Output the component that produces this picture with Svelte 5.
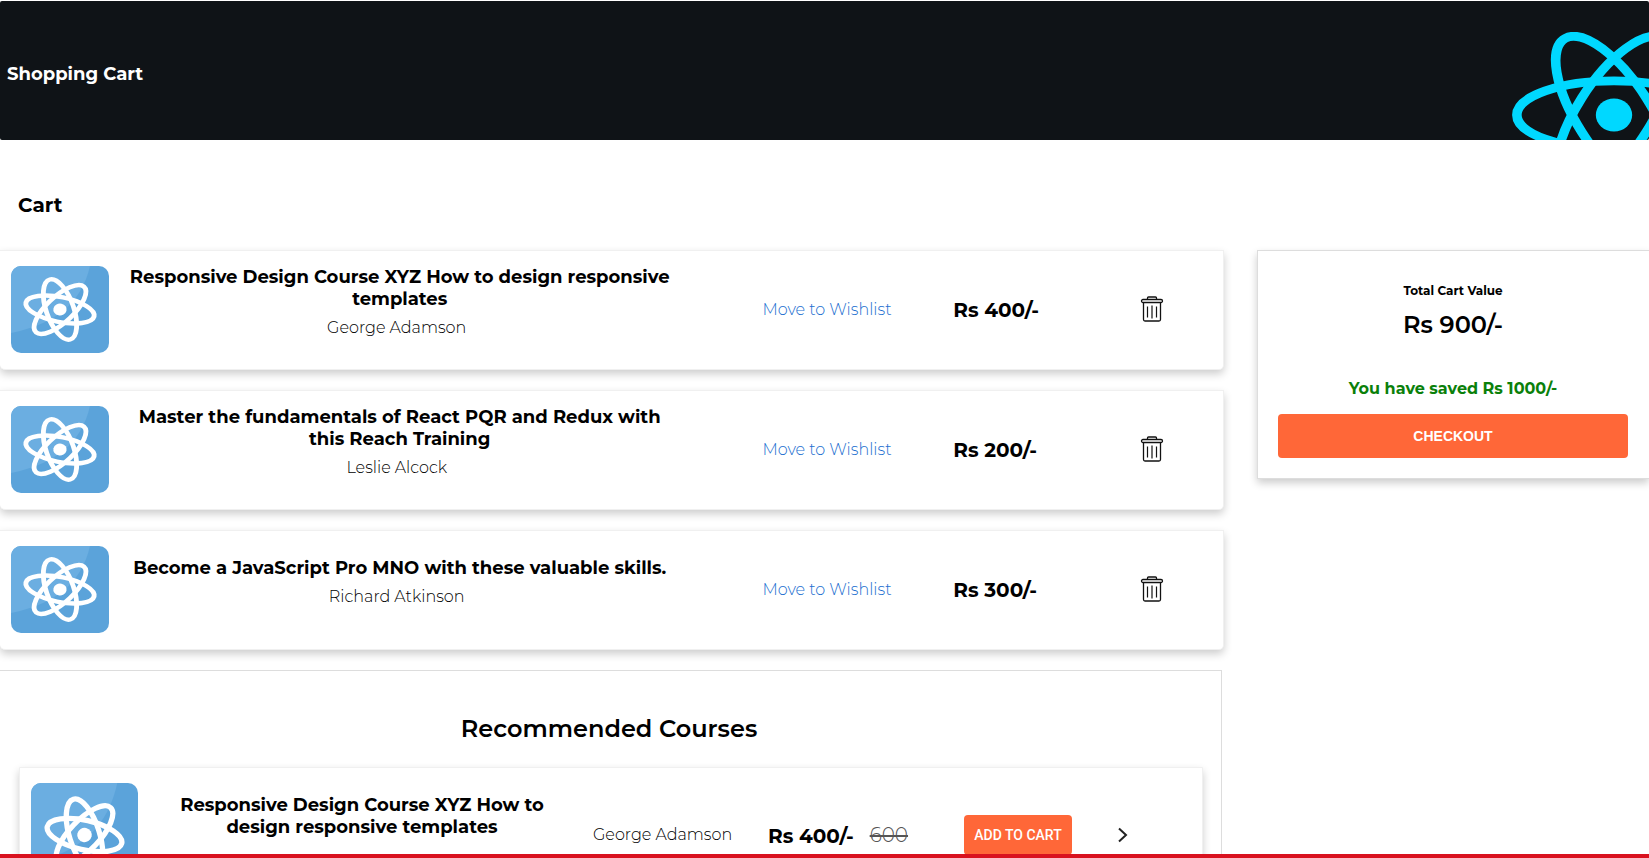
<script>
  const cartItems = [
    { title: 'Responsive Design Course XYZ How to design responsive templates', author: 'George Adamson', price: 400 },
    { title: 'Master the fundamentals of React PQR and Redux with this Reach Training', author: 'Leslie Alcock', price: 200 },
    { title: 'Become a JavaScript Pro MNO with these valuable skills.', author: 'Richard Atkinson', price: 300 }
  ];
  const recommended = [
    { title: 'Responsive Design Course XYZ How to design responsive templates', author: 'George Adamson', price: 400, oldPrice: 600 }
  ];
  const total = cartItems.reduce((sum, item) => sum + item.price, 0);
</script>

{#snippet thumb()}
  <svg class="thumb" viewBox="0 0 98 87" preserveAspectRatio="none" aria-hidden="true">
    <rect width="98" height="87" fill="#5ba3da" />
    <path d="M0 0H79C70 38 44 58 0 67Z" fill="#6baee1" />
    <g transform="translate(49 43.5) scale(1.06 .95) rotate(13)" fill="none" stroke="#fff" stroke-width="4.600">
      <ellipse rx="33" ry="13" />
      <ellipse rx="33" ry="13" transform="rotate(60)" />
      <ellipse rx="33" ry="13" transform="rotate(120)" />
      <circle r="6.300" fill="#fff" stroke="none" />
    </g>
  </svg>
{/snippet}

<div class="page">
  <header class="banner">
    <h1>Shopping Cart</h1>
    <svg class="atom" viewBox="-11.5 -10.25 23 20.5" preserveAspectRatio="none" aria-hidden="true">
      <circle r="2.05" fill="#00d8ff" />
      <g stroke="#00d8ff" stroke-width="1.080" fill="none">
        <ellipse rx="10.950" ry="4.200" />
        <ellipse rx="10.950" ry="4.200" transform="rotate(60)" />
        <ellipse rx="10.950" ry="4.200" transform="rotate(120)" />
      </g>
    </svg>
  </header>

  <h2 class="cart-heading">Cart</h2>

  <div class="columns">
    <main>
      {#each cartItems as item}
        <article class="card item">
          {@render thumb()}
          <div class="info">
            <h3>{item.title}</h3>
            <p class="author">{item.author}</p>
          </div>
          <a class="wishlist" href="#wishlist">Move to Wishlist</a>
          <strong class="price">Rs {item.price}/-</strong>
          <button class="plain" aria-label="Remove from cart">
            <svg width="24" height="26" viewBox="0 0 24 26" fill="none" stroke="#111" aria-hidden="true">
              <path d="M7.5 3V2Q7.5 1 8.500 1H15.500Q16.500 1 16.500 2V3" stroke-width="1.300" />
              <rect x="1.500" y="3.500" width="21" height="3" rx="1.500" stroke-width="1.300" />
              <path d="M3.500 7V23.500Q3.500 25 5 25H19Q20.500 25 20.500 23.500V7" stroke-width="1.300" />
              <path d="M7.500 10.500V21.500M12 9.500V22.500M16.500 10.500V21.500" stroke-width="1.200" />
            </svg>
          </button>
        </article>
      {/each}

      <section class="recommended">
        <h2>Recommended Courses</h2>
        {#each recommended as course}
          <article class="card course">
            {@render thumb()}
            <h3>{course.title}</h3>
            <p class="author">{course.author}</p>
            <div class="prices">
              <strong class="price">Rs {course.price}/-</strong>
              <s>{course.oldPrice}</s>
            </div>
            <button class="primary add">ADD TO CART</button>
            <button class="plain" aria-label="View course">
              <svg width="12" height="16" viewBox="0 0 12 16" fill="none" stroke="#222" stroke-width="2" aria-hidden="true">
                <path d="M2 1.500L9 8L2 14.500" />
              </svg>
            </button>
          </article>
        {/each}
      </section>
    </main>

    <aside class="summary">
      <p class="label">Total Cart Value</p>
      <p class="total">Rs {total}/-</p>
      <p class="saved">You have saved Rs 1000/-</p>
      <button class="primary">CHECKOUT</button>
    </aside>
  </div>
</div>

<style>
  :global(body) {
    margin: 0;
    background: #fff;
  }
  .page {
    box-sizing: border-box;
    height: 100vh;
    overflow: hidden;
    padding-top: 1px;
    border-bottom: 4px solid #d9121f;
    color: #000;
    font-family: Montserrat, Inter, sans-serif;
  }
  h1, h2, h3, p {
    margin: 0;
    font-weight: 700;
  }
  .banner {
    position: relative;
    overflow: hidden;
    padding: 62px 7px 55px;
    border-radius: 2px;
    background: #0f1317;
    color: #fff;
  }
  h1 {
    font-size: 18px;
    line-height: 22px;
  }
  .atom {
    position: absolute;
    top: 31px;
    right: -67px;
    width: 204px;
    height: 166px;
  }
  .cart-heading {
    padding: 53px 18px 33px;
    font-size: 20px;
    line-height: 24px;
  }
  .columns {
    display: grid;
    grid-template-columns: minmax(0, 1224fr) minmax(0, 392fr);
    column-gap: 33px;
    align-items: start;
  }
  .card {
    box-sizing: border-box;
    display: grid;
    align-items: center;
    border: 1px solid #f0f0f0;
    border-radius: 0 0 5px 5px;
    background: #fff;
    box-shadow: 0 4px 8px rgba(0, 0, 0, 0.2);
  }
  .thumb {
    display: block;
    width: 98px;
    height: 87px;
    border-radius: 10px;
  }
  .item {
    grid-template-columns: 108px 644fr 191fr 187fr 83fr;
    min-height: 120px;
    margin-bottom: 20px;
    padding: 0 0 2px 11px;
    border-left: 0;
  }
  .info {
    padding: 0 88px 15px 0;
    text-align: center;
  }
  .info h3 {
    padding-left: 6px;
  }
  .wishlist {
    color: #1c6fd0;
    font-size: 16px;
    font-weight: 300;
    text-decoration: none;
  }
  h3 {
    font-size: 18px;
    line-height: 22px;
    text-align: center;
  }
  .author {
    font-size: 16px;
    line-height: 20px;
    font-weight: 300;
  }
  .info .author {
    margin-top: 8px;
  }
  .price {
    padding-top: 1px;
    font-size: 20px;
    line-height: 24px;
    font-weight: 700;
  }
  button {
    padding: 0;
    border: 0;
    cursor: pointer;
  }
  .plain {
    justify-self: start;
    display: flex;
    background: none;
  }
  .primary {
    border-radius: 4px;
    background: #ff6738;
    color: #fff;
    font: 700 14px "Liberation Sans", Arial, sans-serif;
  }
  .recommended {
    margin-right: 2px;
    padding: 44px 18px 20px 19px;
    border: 1px solid #ddd;
    border-left: 0;
  }
  .recommended h2 {
    margin: 0 4px 24px 0;
    font-size: 24px;
    line-height: 28px;
    font-weight: 600;
    text-align: center;
  }
  .course {
    grid-template-columns: 120px 442fr 175fr 196fr 153fr 85fr;
    min-height: 136px;
    padding-left: 11px;
  }
  .course .thumb {
    width: 107px;
    height: 104px;
  }
  .course h3 {
    padding: 0 28px 38px 8px;
  }
  .prices {
    display: flex;
    align-items: center;
    gap: 16px;
  }
  s {
    color: #555;
    font-size: 20px;
    font-weight: 300;
  }
  .add {
    justify-self: start;
    width: 108px;
    height: 40px;
    font: 500 14px Roboto, "Liberation Sans", sans-serif;
  }
  .summary {
    display: flex;
    flex-direction: column;
    padding: 30px 21px 20px 20px;
    border: 1px solid #ddd;
    border-right: 0;
    box-shadow: 0 4px 8px rgba(0, 0, 0, 0.2);
    text-align: center;
  }
  .label {
    font-size: 12px;
    line-height: 20px;
  }
  .total {
    margin: 8px 0 38px;
    font-size: 24px;
    line-height: 32px;
    font-weight: 600;
  }
  .saved {
    margin-bottom: 15px;
    color: #0a800a;
    font-size: 16px;
    line-height: 20px;
  }
  .summary .primary {
    height: 44px;
  }
</style>
